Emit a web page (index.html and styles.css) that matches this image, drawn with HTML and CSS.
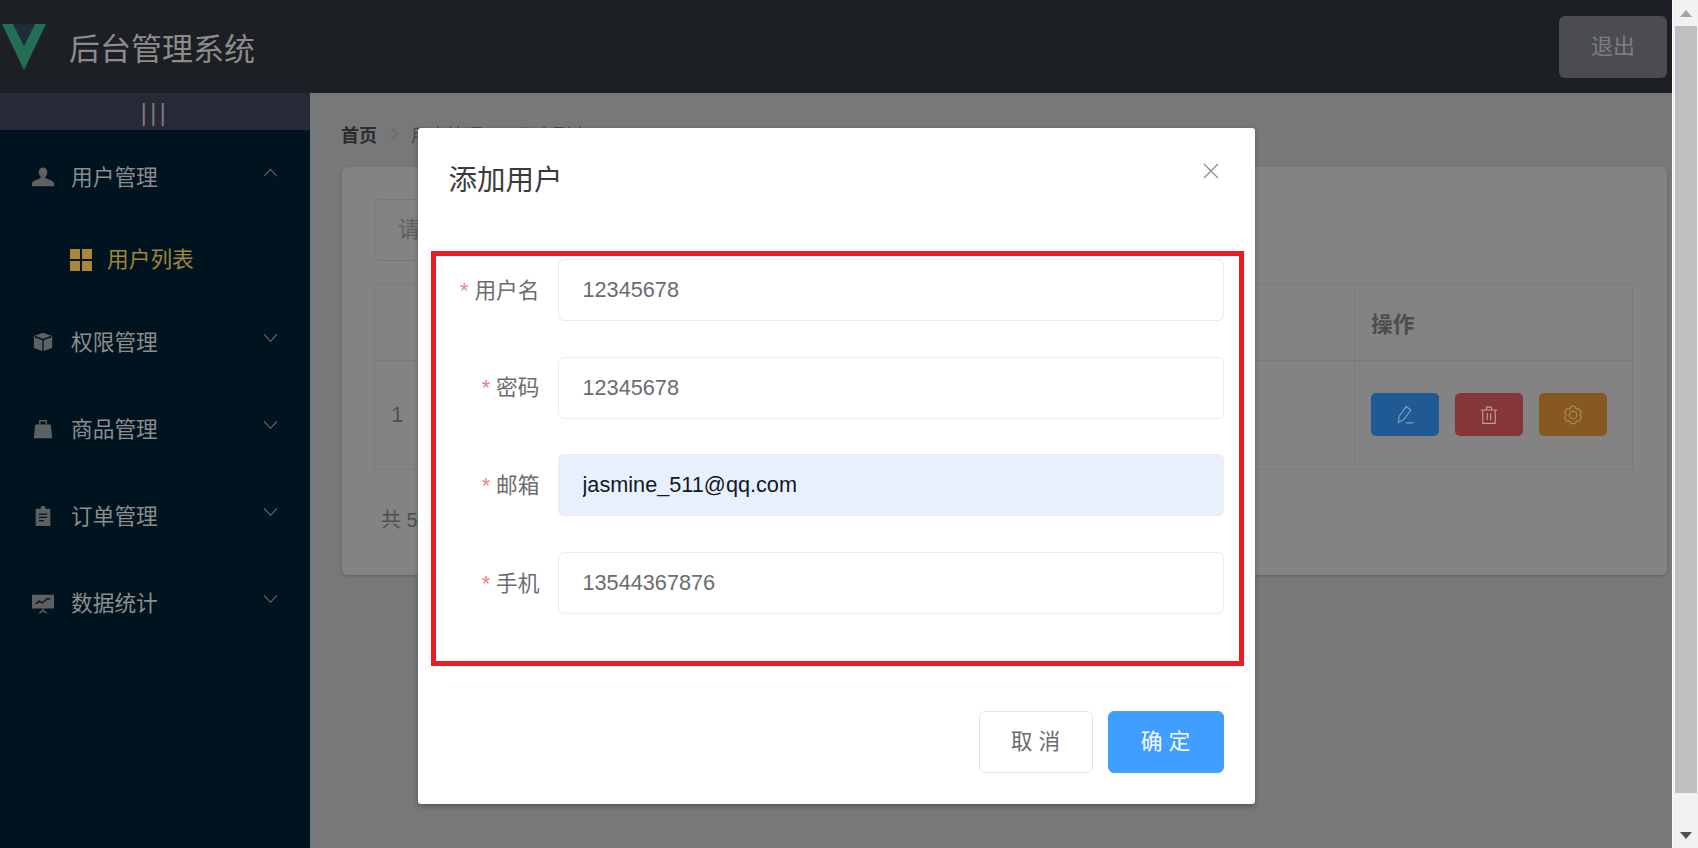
FILE: index.html
```html
<!DOCTYPE html>
<html lang="zh-CN">
<head>
    <meta charset="UTF-8">
    <title>后台管理系统</title>
    <link rel="stylesheet" href="styles.css">
</head>
<body>

    <div class="page">
        <header class="top-bar">
            <svg class="logo" viewBox="0 0 44 46">
                <polygon points="0,0 44,0 22,46" fill="#236f56"/>
                <polygon points="11,0 33,0 22,22" fill="#1e2c3a"/>
            </svg>
            <div class="app-title">后台管理系统</div>
            <button class="logout">退出</button>
        </header>

        <div class="body-row">
            <!-- Left side - menu -->
            <aside class="sidebar">
                <div class="collapse-bar">|||</div>
                <ul class="menu">
                    <li class="menu-item">
                        <svg class="menu-icon" viewBox="0 0 24 24"><path d="M12 1.500c-3 0-4.700 2.300-4.700 5.200 0 2.100 1 3.800 2.100 4.900v1.700c-2 .9-8.100 2.100-9.400 5.300V22h24v-3.400c-1.300-3.200-7.400-4.400-9.400-5.300v-1.700c1.100-1.100 2.100-2.800 2.100-4.900 0-2.900-1.700-5.200-4.700-5.200z"/></svg>
                        <span>用户管理</span>
                        <svg class="chevron" viewBox="0 0 14 8"><path d="M1 7.500L7 1l6 6.500"/></svg>
                    </li>
                    <li class="sub-item">
                        <svg class="grid-icon" viewBox="0 0 22 22"><path d="M0 0h10v10H0zM12 0h10v10H12zM0 12h10v10H0zM12 12h10v10H12z"/></svg>
                        <span>用户列表</span>
                    </li>
                    <li class="menu-item">
                        <svg class="menu-icon" viewBox="0 0 24 24"><path d="M12 2l10 3.500v13L12 22 2 18.500v-13z"/><path class="icon-cut" d="M3 6l9 3.500L21 6M12 9.500V22"/></svg>
                        <span>权限管理</span>
                        <svg class="chevron" viewBox="0 0 14 8"><path d="M1 1l6 6.500L13 1"/></svg>
                    </li>
                    <li class="menu-item">
                        <svg class="menu-icon" viewBox="0 0 24 24"><path d="M3.500 7h17L22 22H2z"/><path class="icon-line" d="M8.500 10V3h7v7"/></svg>
                        <span>商品管理</span>
                        <svg class="chevron" viewBox="0 0 14 8"><path d="M1 1l6 6.500L13 1"/></svg>
                    </li>
                    <li class="menu-item">
                        <svg class="menu-icon" viewBox="0 0 24 24"><path d="M9.500 2.500c0-2 5-2 5 0V4H20v19H4V4h5.500z"/><path class="icon-cut" d="M7.500 10h9M7.500 13.500h9M7.500 17h5.500"/></svg>
                        <span>订单管理</span>
                        <svg class="chevron" viewBox="0 0 14 8"><path d="M1 1l6 6.500L13 1"/></svg>
                    </li>
                    <li class="menu-item">
                        <svg class="menu-icon" viewBox="0 0 24 24"><path d="M0 3h24v15H0z"/><path class="icon-cut" d="M4 13l4-3 3 2 6-5 3 1"/><path class="icon-line" d="M8 23l4-3 4 3M12 18v2"/></svg>
                        <span>数据统计</span>
                        <svg class="chevron" viewBox="0 0 14 8"><path d="M1 1l6 6.500L13 1"/></svg>
                    </li>
                </ul>
            </aside>

            <!-- Right side - list page behind the dialog -->
            <main class="content">
                <div class="breadcrumb">
                    <b>首页</b>
                    <svg class="crumb-sep" viewBox="0 0 8 14"><path d="M1 1l6 6-6 6"/></svg>
                    <span>用户管理</span>
                    <svg class="crumb-sep" viewBox="0 0 8 14"><path d="M1 1l6 6-6 6"/></svg>
                    <span>用户列表</span>
                </div>

                <section class="card">
                    <input class="search" placeholder="请输入内容">
                    <table class="user-table">
                        <tr class="head-row">
                            <th class="col-index"></th>
                            <th></th>
                            <th class="col-actions">操作</th>
                        </tr>
                        <tr class="data-row">
                            <td>1</td>
                            <td></td>
                            <td>
                                <div class="actions">
                                    <button class="act act-blue">
                                        <svg viewBox="0 0 24 24"><path d="M4 21l1-7.500L13.500 2l5.500 4-8.500 11.500zM13 21.500h9"/></svg>
                                    </button>
                                    <button class="act act-red">
                                        <svg viewBox="0 0 24 24"><path d="M2 6h20M9 6V2.500h6V6M4.500 6v16h15V6M10 10v8M14 10v8"/></svg>
                                    </button>
                                    <button class="act act-orange">
                                        <svg viewBox="0 0 24 24"><path d="M9.800 1.700h4.400l2.050 2.940 3.550.33 2.190 3.790L20.500 12l1.490 3.240-2.190 3.790-3.550.33-2.050 2.940H9.800l-2.050-2.940-3.550-.33-2.190-3.790L3.500 12 2.010 8.760 4.200 4.970l3.550-.33z"/><circle cx="12" cy="12" r="4.500"/></svg>
                                    </button>
                                </div>
                            </td>
                        </tr>
                    </table>
                    <div class="total">共 5 条</div>
                </section>
            </main>
        </div>

        <!-- Dialog -->
        <div class="dialog-wrap">
            <div class="dialog">
                <div class="dialog-head">
                    <div class="dialog-title">添加用户</div>
                    <svg class="close" viewBox="0 0 16 16"><path d="M1 1l14 14M15 1L1 15"/></svg>
                </div>
                <form class="form">
                    <div class="form-row">
                        <label><i>*</i> 用户名</label>
                        <input value="12345678">
                    </div>
                    <div class="form-row">
                        <label><i>*</i> 密码</label>
                        <input value="12345678">
                    </div>
                    <div class="form-row">
                        <label><i>*</i> 邮箱</label>
                        <input class="filled" value="jasmine_511@qq.com">
                    </div>
                    <div class="form-row">
                        <label><i>*</i> 手机</label>
                        <input value="13544367876">
                    </div>
                </form>
                <div class="dialog-foot">
                    <button class="btn">取 消</button>
                    <button class="btn btn-primary">确 定</button>
                </div>
                <div class="red-mark"></div>
            </div>
        </div>
    </div>

    <!-- Browser scrollbar -->
    <div class="scrollbar">
        <div class="arrow-box"><div class="arrow-up"></div></div>
        <div class="thumb"></div>
        <div class="arrow-box arrow-end"><div class="arrow-down"></div></div>
    </div>

</body>
</html>
```

FILE: styles.css
```css
* {
    box-sizing: border-box;
    margin: 0;
    padding: 0;
    font-family: "Liberation Sans", "Noto Sans CJK SC", sans-serif;
}

body {
    display: flex;
    height: 848px;
    overflow: hidden;
    background: #77787a;
}

.page {
    position: relative;
    display: flex;
    flex-direction: column;
    width: 1672px;
    height: 848px;
    overflow: hidden;
}

/* Top bar */
.top-bar {
    display: flex;
    align-items: center;
    height: 93px;
    padding: 0 5px 0 2px;
    background: #1c1f23;
    flex-shrink: 0;
}

.logo {
    width: 44px;
    height: 46px;
    margin-right: 23px;
}

.app-title {
    font-size: 31px;
    color: #8c8c8c;
}

.logout {
    width: 108px;
    height: 62px;
    margin-left: auto;
    padding-bottom: 6px;
    font-size: 22px;
    color: #7c7d7e;
    background: #4b4c50;
    border: none;
    border-radius: 6px;
}

.body-row {
    display: flex;
    flex: 1;
}

/* Sidebar */
.sidebar {
    width: 310px;
    background: #00141f;
    flex-shrink: 0;
}

.collapse-bar {
    height: 37px;
    line-height: 40px;
    text-align: center;
    font-size: 23px;
    letter-spacing: 3.500px;
    color: #7c7d80;
    background: #272936;
    overflow: hidden;
}

.menu {
    list-style: none;
    padding-top: 3.500px;
}

.menu-item {
    display: flex;
    align-items: center;
    gap: 17px;
    height: 87px;
    padding: 0 32px;
    font-size: 21.700px;
    color: #8b8d8e;
}

.menu-item span,
.sub-item span {
    margin-bottom: 4px;
}

.menu-icon {
    width: 22px;
    height: 22px;
    fill: #5f6062;
}

.icon-cut {
    fill: none;
    stroke: #00141f;
    stroke-width: 1.500;
}

.icon-line {
    fill: none;
    stroke: #5f6062;
    stroke-width: 1.500;
}

.chevron {
    width: 15px;
    height: 9px;
    margin-left: auto;
    margin-top: -9px;
    fill: none;
    stroke: #6a6d70;
    stroke-width: 1;
}

.sub-item {
    display: flex;
    align-items: center;
    gap: 15px;
    height: 78px;
    padding-left: 70px;
    font-size: 21.700px;
    color: #a08638;
}

.grid-icon {
    width: 22px;
    height: 22px;
    fill: #a8873a;
}

/* List page behind the dialog */
.content {
    flex: 1;
    padding: 30px 5px 0 32px;
    background: #77787a;
}

.breadcrumb {
    display: flex;
    align-items: center;
    gap: 13px;
    height: 22px;
    font-size: 18px;
    color: #4a4b4d;
}

.breadcrumb b {
    color: #2c2c2e;
    margin-left: -1px;
}

.crumb-sep {
    width: 8px;
    height: 14px;
    fill: none;
    stroke: #5e5e60;
    stroke-width: 1;
}

.card {
    height: 408px;
    margin-top: 22px;
    padding: 32px 34px 0 32px;
    background: #838383;
    border-radius: 6px;
    box-shadow: 0 1px 3px rgba(0, 0, 0, 0.2);
}

.search {
    display: block;
    width: 560px;
    height: 62px;
    padding: 0 23px;
    font-size: 21.700px;
    background: #838383;
    border: 1px solid #777778;
    border-radius: 6px;
}

.search::placeholder {
    color: #5e5e5e;
}

.user-table {
    width: 100%;
    margin-top: 23px;
    table-layout: fixed;
    border-collapse: collapse;
}

.user-table th,
.user-table td {
    padding-left: 16px;
    text-align: left;
    border: 1px solid #7b7b7b;
}

.head-row {
    height: 76px;
}

.data-row {
    height: 109px;
}

.col-index {
    width: 77px;
}

.col-actions {
    width: 278px;
    font-size: 21.700px;
    color: #4d4d4f;
}

.data-row td {
    font-size: 22.500px;
    color: #4f4f50;
}

.actions {
    display: flex;
    gap: 16px;
    margin-top: -1px;
}

.act {
    display: flex;
    align-items: center;
    justify-content: center;
    width: 68px;
    height: 43px;
    border: none;
    border-radius: 5px;
}

.act svg {
    width: 20px;
    height: 20px;
    fill: none;
    stroke-width: 1.400;
}

.act-blue {
    background: #1f5a94;
}

.act-blue svg {
    stroke: #7f9fc0;
}

.act-red {
    background: #853738;
}

.act-red svg {
    stroke: #c09a9a;
}

.act-orange {
    background: #85591f;
}

.act-orange svg {
    stroke: #ab8c55;
}

.total {
    margin-top: 34px;
    padding-left: 7px;
    font-size: 20px;
    color: #4f5050;
}

/* Dialog */
.dialog-wrap {
    position: absolute;
    top: 0;
    left: 0;
    right: 0;
    bottom: 0;
    display: flex;
    justify-content: center;
    align-items: flex-start;
    padding-top: 128px;
}

.dialog {
    position: relative;
    width: 837px;
    height: 676px;
    padding-top: 31px;
    background: #fff;
    border-radius: 3px;
    box-shadow: 0 2px 5px rgba(0, 0, 0, 0.3);
}

.dialog-head {
    display: flex;
    justify-content: space-between;
    height: 38px;
    padding: 0 36px 0 31px;
}

.dialog-title {
    font-size: 28.500px;
    line-height: 42px;
    color: #3a3b3e;
}

.close {
    width: 16px;
    height: 16px;
    margin-top: 4px;
    fill: none;
    stroke: #8a8d92;
    stroke-width: 1.300;
}

.form {
    display: flex;
    flex-direction: column;
    gap: 35.700px;
    margin-top: 62px;
    padding: 0 31px;
}

.form-row {
    display: flex;
    align-items: center;
}

.form-row label {
    width: 109px;
    padding: 0 18px 4px 0;
    text-align: right;
    font-size: 21.700px;
    color: #6a6c70;
}

.form-row i {
    font-style: normal;
    color: #e78484;
}

.form-row input {
    flex: 1;
    height: 62px;
    padding: 0 24px;
    font-size: 21.700px;
    color: #6a6c70;
    background: #fff;
    border: 1.500px solid #e9ebee;
    border-radius: 6px;
    outline: none;
}

.form-row input.filled {
    color: #14181d;
    background: #e8f0fe;
}

.dialog-foot {
    display: flex;
    justify-content: flex-end;
    gap: 15px;
    margin-top: 97px;
    padding: 0 31px;
}

.btn {
    width: 114px;
    height: 62px;
    padding-bottom: 6px;
    font-size: 21.700px;
    color: #6a6c70;
    background: #fff;
    border: 1.500px solid #e3e5e9;
    border-radius: 6px;
}

.btn-primary {
    width: 116px;
    color: #fff;
    background: #409eff;
    border-color: #409eff;
}

/* Red note drawn over the form */
.red-mark {
    position: absolute;
    top: 123px;
    left: 13px;
    width: 813px;
    height: 415px;
    border: 5px solid #ed1c24;
}

/* Browser scrollbar */
.scrollbar {
    display: flex;
    flex-direction: column;
    width: 26px;
    height: 848px;
    padding-left: 2px;
    background: #f1f1f1;
    border-left: 1px solid #fdfdfd;
}

.arrow-box {
    display: flex;
    align-items: center;
    justify-content: center;
    height: 26px;
    padding-right: 2px;
}

.arrow-end {
    margin-top: auto;
}

.arrow-up {
    border-left: 6px solid transparent;
    border-right: 6px solid transparent;
    border-bottom: 7px solid #a3a3a3;
}

.arrow-down {
    border-left: 6px solid transparent;
    border-right: 6px solid transparent;
    border-top: 7px solid #505050;
}

.thumb {
    width: 22px;
    height: 767px;
    background: #bfbfbf;
}
```
